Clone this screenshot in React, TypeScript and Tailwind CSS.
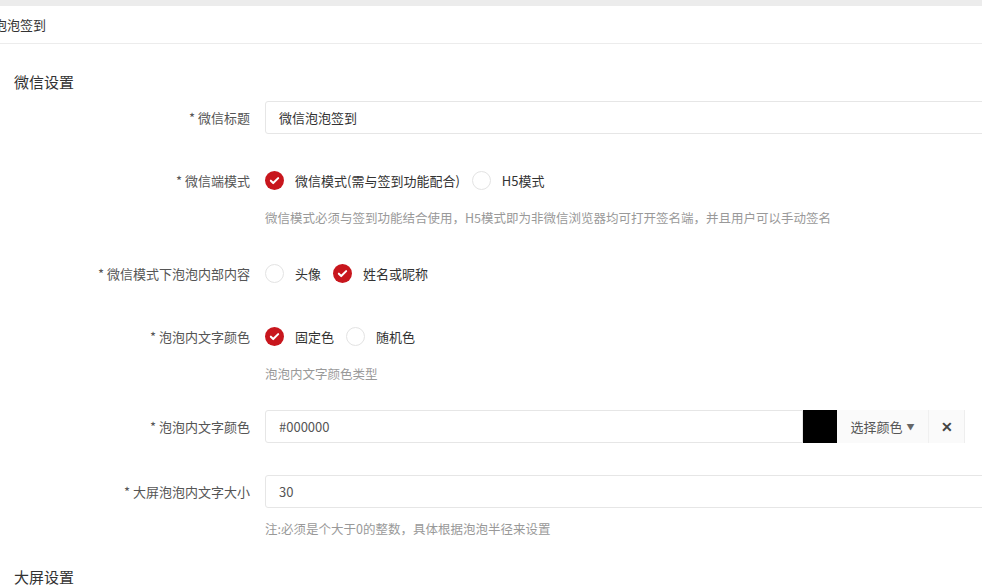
import React from "react";

const F = { fontFamily: '"Noto Sans CJK SC","Microsoft YaHei",sans-serif' };

function Radio({ on, label }: { on?: boolean; label: string }) {
  return (
    <div className="flex items-center mr-[12px]">
      {on ? (
        <span className="w-[19px] h-[19px] rounded-full bg-[#c8161d] flex items-center justify-center">
          <svg width="11" height="11" viewBox="0 0 12 12"><path d="M2 6.2l2.6 2.6L10 3.4" fill="none" stroke="#fff" strokeWidth="2.2" strokeLinecap="round" strokeLinejoin="round" /></svg>
        </span>
      ) : (
        <span className="w-[19px] h-[19px] rounded-full border border-[#e3e3e3] bg-white" />
      )}
      <span className="ml-[11px] text-[13px] text-[#333]">{label}</span>
    </div>
  );
}

function Row({ label, children, help, h = 33, mb }: { label: string; children: React.ReactNode; help?: string; h?: number; mb: string }) {
  return (
    <div className={`flex ${mb}`}>
      <div className="w-[251px] shrink-0 text-right pr-[1px] text-[13px] text-[#555] flex items-center justify-end" style={{ height: h }}>* {label}</div>
      <div className="ml-[14px] flex-1">
        <div className="flex items-center" style={{ height: h }}>{children}</div>
        {help && <div className="text-[12.5px] text-[#999] mt-[12px] leading-[18px]">{help}</div>}
      </div>
    </div>
  );
}

export default function App() {
  return (
    <div className="w-[982px] h-[588px] overflow-hidden bg-white" style={F}>
      <div className="h-[6px] bg-[#ececec]" />
      <div className="h-[38px] border-b border-[#ececec] flex items-center text-[13px] text-[#333] -ml-[6px]">泡泡签到</div>
      <div className="pl-[14px] pt-[27px] text-[15px] text-[#333] h-[57px]">微信设置</div>
      <Row label="微信标题" mb="mb-[30px]">
        <div className="w-[730px] h-full border border-[#e6e6e6] rounded-l-[3px] flex items-center px-[13px] text-[13px] text-[#333] shrink-0">微信泡泡签到</div>
      </Row>
      <Row label="微信端模式" mb="mb-[30px]" help="微信模式必须与签到功能结合使用，H5模式即为非微信浏览器均可打开签名端，并且用户可以手动签名">
        <Radio on label="微信模式(需与签到功能配合)" />
        <Radio label="H5模式" />
      </Row>
      <Row label="微信模式下泡泡内部内容" mb="mb-[30px]">
        <Radio label="头像" />
        <Radio on label="姓名或昵称" />
      </Row>
      <Row label="泡泡内文字颜色" mb="mb-[27px]" help="泡泡内文字颜色类型">
        <Radio on label="固定色" />
        <Radio label="随机色" />
      </Row>
      <Row label="泡泡内文字颜色" mb="mb-[32px]">
        <div className="flex h-full w-[700px]">
          <div className="flex-1 border border-[#e6e6e6] rounded-l-[3px] flex items-center px-[13px] text-[13px] text-[#555]">#000000</div>
          <div className="w-[34px] bg-black" />
          <div className="w-[92px] bg-[#fafafa] border-r border-[#f0f0f0] flex items-center justify-center text-[13px] text-[#555]">选择颜色<span className="ml-[4px] text-[8px] text-[#666]">▼</span></div>
          <div className="w-[36px] bg-[#fafafa] border-r border-[#eee] flex items-center justify-center text-[14px] font-bold text-[#444]">✕</div>
        </div>
      </Row>
      <Row label="大屏泡泡内文字大小" mb="mb-[28px]" help="注:必须是个大于0的整数，具体根据泡泡半径来设置">
        <div className="w-[730px] h-full border border-[#e6e6e6] rounded-l-[3px] flex items-center px-[13px] text-[13px] text-[#555] shrink-0">30</div>
      </Row>
      <div className="pl-[14px] text-[15px] text-[#333]">大屏设置</div>
    </div>
  );
}
